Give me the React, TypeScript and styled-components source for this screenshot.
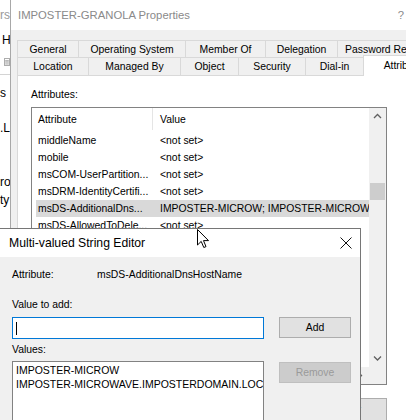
import React from "react";
import styled, { createGlobalStyle } from "styled-components";

const Global = createGlobalStyle`
  html, body { margin: 0; padding: 0; background: #fff; }
  body { font-family: "Liberation Sans", Arial, sans-serif; }
`;

const Screen = styled.div`
  position: relative;
  width: 406px;
  height: 420px;
  overflow: hidden;
  display: flex;
  background: #fff;
  font-family: "Liberation Sans", Arial, sans-serif;
  font-size: 10.4px;
  color: #000;
`;

/* ---------- background window strip ---------- */
const LeftStrip = styled.div`
  width: 10px;
  flex-shrink: 0;
  display: flex;
  flex-direction: column;
  overflow: hidden;
  background: #fff;
  font-size: 12px;
`;

const StripRow = styled.div<{ $h: number; $pl?: number; $color?: string }>`
  height: ${(p) => p.$h}px;
  flex-shrink: 0;
  display: flex;
  align-items: center;
  padding-left: ${(p) => p.$pl ?? 0}px;
  color: ${(p) => p.$color ?? "#000"};
  white-space: nowrap;
`;

const StripLine = styled.div`
  height: 1px;
  flex-shrink: 0;
  background: #d4d4d4;
`;

/* ---------- properties window ---------- */
const PropWindow = styled.div`
  flex: 1;
  min-width: 0;
  display: flex;
  flex-direction: column;
  border-left: 1px solid #a8a8a8;
  background: #f0f0f0;
`;

const PropTitleBar = styled.div`
  height: 30px;
  flex-shrink: 0;
  display: flex;
  align-items: center;
  justify-content: space-between;
  padding: 0 2px 0 7px;
  background: #fff;
  color: #8a8a8a;
  font-size: 11.3px;
  white-space: nowrap;
`;

const PropBody = styled.div`
  flex: 1;
  display: flex;
  flex-direction: column;
  padding: 10px 0 0 6px;
`;

const TabRow = styled.div<{ $h: number }>`
  display: flex;
  height: ${(p) => p.$h}px;
  flex-shrink: 0;
  white-space: nowrap;
`;

const Tab = styled.div<{ $w: number; $selected?: boolean }>`
  width: ${(p) => p.$w}px;
  flex-shrink: 0;
  box-sizing: border-box;
  display: flex;
  align-items: center;
  justify-content: center;
  border: 1px solid #d9d9d9;
  border-bottom: none;
  margin-left: -1px;
  &:first-child { margin-left: 0; }
  background: ${(p) => (p.$selected ? "#fff" : "#f0f0f0")};
  position: relative;
  z-index: ${(p) => (p.$selected ? 2 : 1)};
  margin-top: ${(p) => (p.$selected ? "-2px" : "0")};
  height: ${(p) => (p.$selected ? "calc(100% + 3px)" : "100%")};
  padding-bottom: ${(p) => (p.$selected ? "1px" : "0")};
  overflow: hidden;
`;

const TabPage = styled.div`
  flex: 1;
  background: #fff;
  border: 1px solid #d9d9d9;
  border-right: none;
  display: flex;
  flex-direction: column;
  padding: 12px 0 0 13px;
`;

const FieldLabel = styled.div`
  line-height: 14px;
  height: 14px;
  white-space: nowrap;
`;

const ListView = styled.div`
  margin-top: 5px;
  width: 356px;
  height: 278px;
  box-sizing: border-box;
  border: 1px solid #828282;
  display: grid;
  grid-template-columns: 1fr 17px;
  grid-template-rows: 1fr 17px;
  flex-shrink: 0;
`;

const ListMain = styled.div`
  overflow: hidden;
  display: flex;
  flex-direction: column;
`;

const HeaderRow = styled.div`
  height: 22px;
  display: flex;
  flex-shrink: 0;
`;

const HeaderCell = styled.div<{ $w?: number; $pl: number; $divider?: boolean }>`
  ${(p) => (p.$w ? `width: ${p.$w}px; flex-shrink: 0;` : "flex: 1;")}
  box-sizing: border-box;
  padding-left: ${(p) => p.$pl}px;
  display: flex;
  align-items: center;
  border-right: ${(p) => (p.$divider ? "1px solid #e5e5e5" : "none")};
`;

const Rows = styled.div`
  padding-top: 2px;
  display: flex;
  flex-direction: column;
`;

const Row = styled.div<{ $selected?: boolean }>`
  height: 17px;
  display: flex;
  align-items: center;
  margin-left: 4px;
  background: ${(p) => (p.$selected ? "#d9d9d9" : "transparent")};
  white-space: nowrap;
`;

const Cell = styled.div<{ $w?: number; $pl: number }>`
  ${(p) => (p.$w ? `width: ${p.$w}px; flex-shrink: 0;` : "flex: 1; min-width: 0;")}
  box-sizing: border-box;
  padding-left: ${(p) => p.$pl}px;
  overflow: hidden;
`;

const VScroll = styled.div`
  background: #f0f0f0;
  display: flex;
  flex-direction: column;
`;

const ScrollArrow = styled.div`
  height: 17px;
  width: 17px;
  flex-shrink: 0;
  display: flex;
  align-items: center;
  justify-content: center;
`;

const Thumb = styled.div`
  margin: 58px 1px 0 1px;
  height: 17px;
  background: #cdcdcd;
`;

const Spacer = styled.div`
  flex: 1;
`;

const HScroll = styled.div`
  background: #f0f0f0;
  display: flex;
  justify-content: flex-end;
`;

const Corner = styled.div`
  background: #f0f0f0;
`;

const PageButtons = styled.div`
  margin-top: 13px;
  width: 356px;
  display: flex;
  justify-content: flex-end;
`;

const Button = styled.div<{ $w: number; $h: number; $disabled?: boolean }>`
  width: ${(p) => p.$w}px;
  height: ${(p) => p.$h}px;
  flex-shrink: 0;
  box-sizing: border-box;
  display: flex;
  align-items: center;
  justify-content: center;
  border: 1px solid ${(p) => (p.$disabled ? "#bfbfbf" : "#adadad")};
  background: ${(p) => (p.$disabled ? "#cccccc" : "#e1e1e1")};
  color: ${(p) => (p.$disabled ? "#9a9a9a" : "#000")};
`;

/* ---------- multi-valued string editor ---------- */
const Dialog = styled.div`
  position: absolute;
  left: -1px;
  top: 228px;
  width: 362px;
  height: 200px;
  box-sizing: border-box;
  border: 1px solid #767676;
  display: flex;
  flex-direction: column;
  background: #f0f0f0;
  z-index: 5;
`;

const DialogTitleBar = styled.div`
  height: 28px;
  flex-shrink: 0;
  background: #fff;
  display: flex;
  align-items: center;
  justify-content: space-between;
  padding: 0 8px 0 9px;
  font-size: 12.2px;
`;

const DialogBody = styled.div`
  flex: 1;
  display: flex;
  flex-direction: column;
  padding: 11px 0 0 12px;
`;

const InfoRow = styled.div`
  display: flex;
  line-height: 14px;
  height: 14px;
  white-space: nowrap;
`;

const InfoKey = styled.div`
  width: 85px;
  flex-shrink: 0;
`;

const Gap = styled.div<{ $h: number }>`
  height: ${(p) => p.$h}px;
  flex-shrink: 0;
`;

const ControlRow = styled.div`
  display: flex;
  gap: 15px;
  align-items: flex-start;
`;

const TextInput = styled.div`
  width: 252px;
  height: 22px;
  box-sizing: border-box;
  border: 1px solid #0078d7;
  background: #fff;
  display: flex;
  align-items: center;
  padding-left: 3px;
`;

const Caret = styled.div`
  width: 1px;
  height: 13px;
  background: #000;
`;

const ValuesList = styled.div`
  width: 252px;
  height: 80px;
  box-sizing: border-box;
  border: 1px solid #828282;
  background: #fff;
  padding: 1px 0 0 3px;
  overflow: hidden;
  white-space: nowrap;
`;

const ValueItem = styled.div`
  line-height: 14px;
  height: 14px;
  font-size: 10.5px;
`;

const RemoveWrap = styled.div`
  margin-top: 1px;
`;

const CursorLayer = styled.svg`
  position: absolute;
  left: 197px;
  top: 229px;
  z-index: 10;
`;

const Chevron = ({ dir }: { dir: "up" | "down" | "right" }) => {
  const d =
    dir === "up"
      ? "M1 5 L4.5 1.5 L8 5"
      : dir === "down"
      ? "M1 1.5 L4.5 5 L8 1.5"
      : "M2 1 L5.5 4.5 L2 8";
  return (
    <svg width="9" height={dir === "right" ? 9 : 7} viewBox={dir === "right" ? "0 0 9 9" : "0 0 9 7"}>
      <path d={d} fill="none" stroke="#606060" strokeWidth="1.3" />
    </svg>
  );
};

const rows: [string, string][] = [
  ["middleName", "<not set>"],
  ["mobile", "<not set>"],
  ["msCOM-UserPartition...", "<not set>"],
  ["msDRM-IdentityCertifi...", "<not set>"],
  ["msDS-AdditionalDns...", "IMPOSTER-MICROW; IMPOSTER-MICROWAVE.IMPOSTERDOMAIN.LOCAL"],
  ["msDS-AllowedToDele...", "<not set>"],
  ["msDS-AllowedToDele...", "<not set>"],
  ["msDS-AuthenticatedA...", "<not set>"],
];

export default function App() {
  return (
    <>
      <Global />
      <Screen>
        <LeftStrip>
          <StripRow $h={30} $color="#9a9a9a">rs</StripRow>
          <StripRow $h={20} $pl={2}>H</StripRow>
          <StripRow $h={24} $pl={4}>
            <svg width="10" height="12" viewBox="0 0 10 12">
              <rect x="0.5" y="0.5" width="9" height="11" fill="#fff" stroke="#777" />
              <path d="M2 3.5 H8 M2 5.5 H8 M2 7.5 H8 M2 9.5 H8" stroke="#888" />
            </svg>
          </StripRow>
          <StripLine />
          <StripRow $h={35}>s .</StripRow>
          <StripRow $h={36}>.L</StripRow>
          <StripRow $h={27} />
          <StripRow $h={18}>ro</StripRow>
          <StripRow $h={18}>ty</StripRow>
        </LeftStrip>

        <PropWindow>
          <PropTitleBar>
            <span>IMPOSTER-GRANOLA Properties</span>
            <span>?</span>
          </PropTitleBar>
          <PropBody>
            <TabRow $h={17}>
              <Tab $w={62}>General</Tab>
              <Tab $w={108}>Operating System</Tab>
              <Tab $w={81}>Member Of</Tab>
              <Tab $w={73}>Delegation</Tab>
              <Tab $w={116}>Password Replication</Tab>
            </TabRow>
            <TabRow $h={18}>
              <Tab $w={72}>Location</Tab>
              <Tab $w={93}>Managed By</Tab>
              <Tab $w={59}>Object</Tab>
              <Tab $w={68}>Security</Tab>
              <Tab $w={59}>Dial-in</Tab>
              <Tab $w={110} $selected>Attribute Editor</Tab>
            </TabRow>
            <TabPage>
              <FieldLabel>Attributes:</FieldLabel>
              <ListView>
                <ListMain>
                  <HeaderRow>
                    <HeaderCell $w={121} $pl={6} $divider>Attribute</HeaderCell>
                    <HeaderCell $pl={7}>Value</HeaderCell>
                  </HeaderRow>
                  <Rows>
                    {rows.map(([a, v], i) => (
                      <Row key={i} $selected={i === 4}>
                        <Cell $w={117} $pl={2}>{a}</Cell>
                        <Cell $pl={7}>{v}</Cell>
                      </Row>
                    ))}
                  </Rows>
                </ListMain>
                <VScroll>
                  <ScrollArrow><Chevron dir="up" /></ScrollArrow>
                  <Thumb />
                  <Spacer />
                  <ScrollArrow><Chevron dir="down" /></ScrollArrow>
                </VScroll>
                <HScroll>
                  <ScrollArrow><Chevron dir="right" /></ScrollArrow>
                </HScroll>
                <Corner />
              </ListView>
              <PageButtons>
                <Button $w={75} $h={23}>Filter</Button>
              </PageButtons>
            </TabPage>
          </PropBody>
        </PropWindow>

        <Dialog>
          <DialogTitleBar>
            <span>Multi-valued String Editor</span>
            <svg width="12" height="12" viewBox="0 0 12 12">
              <path d="M0.5 0.5 L11.5 11.5 M11.5 0.5 L0.5 11.5" stroke="#111" strokeWidth="1" />
            </svg>
          </DialogTitleBar>
          <DialogBody>
            <InfoRow>
              <InfoKey>Attribute:</InfoKey>
              <span>msDS-AdditionalDnsHostName</span>
            </InfoRow>
            <Gap $h={16} />
            <FieldLabel>Value to add:</FieldLabel>
            <Gap $h={5} />
            <ControlRow>
              <TextInput><Caret /></TextInput>
              <Button $w={72} $h={21}>Add</Button>
            </ControlRow>
            <Gap $h={4} />
            <FieldLabel>Values:</FieldLabel>
            <Gap $h={4} />
            <ControlRow>
              <ValuesList>
                <ValueItem>IMPOSTER-MICROW</ValueItem>
                <ValueItem>IMPOSTER-MICROWAVE.IMPOSTERDOMAIN.LOCAL</ValueItem>
              </ValuesList>
              <RemoveWrap>
                <Button $w={72} $h={21} $disabled>Remove</Button>
              </RemoveWrap>
            </ControlRow>
          </DialogBody>
        </Dialog>

        <CursorLayer width="13" height="20" viewBox="0 0 13 20">
          <path
            d="M0.5 0.5 L0.5 16 L4.2 12.4 L6.8 18.5 L9 17.6 L6.5 11.6 L11.5 11.6 Z"
            fill="#fff"
            stroke="#000"
            strokeWidth="1"
            strokeLinejoin="miter"
          />
        </CursorLayer>
      </Screen>
    </>
  );
}
